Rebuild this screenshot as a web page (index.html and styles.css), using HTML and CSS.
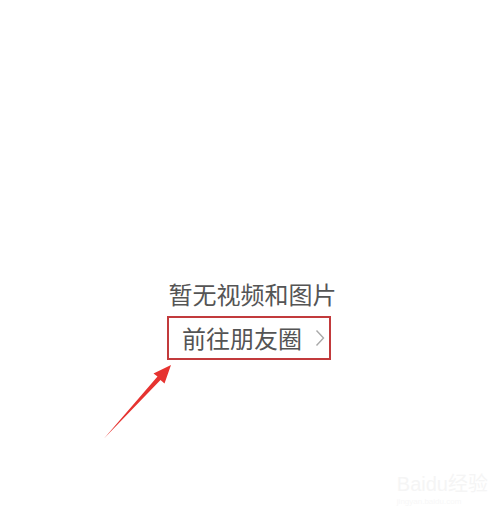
FILE: index.html
```html
<!DOCTYPE html>
<html lang="zh-CN">
<head>
  <meta charset="UTF-8" />
  <title>朋友圈</title>
  <link rel="stylesheet" href="styles.css">
</head>
<body>
  <div class="empty">
    <div class="empty-title">暂无视频和图片</div>
    <a class="moments-link" href="#">
      <span>前往朋友圈</span>
      <svg class="chevron" width="10" height="18" viewBox="0 0 10 18">
        <path d="M1.5 1.5 L8.5 9 L1.5 16.5" fill="none" stroke="#a9a9a9" stroke-width="1.4" />
      </svg>
    </a>
  </div>

  <!-- annotation arrow -->
  <svg class="arrow" width="500" height="520" viewBox="0 0 500 520">
    <polygon points="171,365 153.5,373.5 157.5,376.5 104,438.5 160.5,380 164.5,383.5" fill="#e63330" />
  </svg>

  <div class="watermark">Bai<span class="paw">du</span>经验<div class="watermark-url">jingyan.baidu.com</div></div>
</body>
</html>
```

FILE: styles.css
```css
body {
  margin: 0;
  width: 500px;
  height: 520px;
  background: #ffffff;
  font-family: "Noto Sans CJK SC", "Noto Sans", sans-serif;
  position: relative;
  overflow: hidden;
}

.empty {
  display: flex;
  flex-direction: column;
  align-items: center;
  padding-top: 278px;
}

.empty-title {
  font-size: 24px;
  line-height: 32px;
  color: #555555;
  margin-left: 5px;
}

.moments-link {
  display: flex;
  align-items: center;
  width: 147px;
  height: 40px;
  margin-top: 6px;
  margin-right: 2px;
  padding-left: 13px;
  border: 2px solid #c23a3c;
  color: #545454;
  font-size: 24px;
  text-decoration: none;
}

.moments-link span {
  line-height: 40px;
}

.chevron {
  margin-left: 13px;
}

.arrow {
  position: absolute;
  top: 0;
  left: 0;
  pointer-events: none;
}

.watermark {
  position: absolute;
  right: 12px;
  bottom: 14px;
  font-family: "Liberation Sans", sans-serif;
  font-size: 20px;
  color: #f5f5f5;
}

.watermark-url {
  font-size: 8px;
  color: #f7f7f7;
}
```
